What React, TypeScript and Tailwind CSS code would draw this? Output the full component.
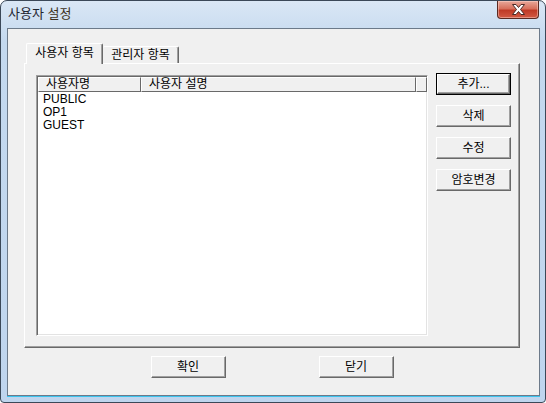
import React from "react";

const FONT = { fontFamily: '"Liberation Sans", "Noto Sans CJK KR", sans-serif' };

const users = ["PUBLIC", "OP1", "GUEST"];

function PushButton({ label, isDefault = false }: { label: string; isDefault?: boolean }) {
  const face = (
    <div className="flex h-full w-full items-center justify-center border border-t-white border-l-white border-r-[#696969] border-b-[#696969] bg-[#f0f0f0] text-[12px] leading-none text-black shadow-[inset_-1px_-1px_0_#a0a0a0]">
      {label}
    </div>
  );
  if (isDefault) {
    return <div className="h-[22px] w-[75px] border border-black">{face}</div>;
  }
  return <div className="h-[22px] w-[75px]">{face}</div>;
}

function CloseButton() {
  return (
    <div className="flex h-[18px] w-[42px] items-center justify-center rounded-b-[4px] border border-t-0 border-[#5a2a22] bg-[linear-gradient(#e8a89a_0%,#d7705c_45%,#bf3a26_55%,#d25a44_100%)] shadow-[inset_0_0_0_1px_rgba(255,220,210,0.45)]">
      <svg width="15" height="11" viewBox="0 0 15 11">
        <path
          d="M1.5 0.5 H5 L7.5 3.5 L10 0.5 H13.5 L9.5 5.5 L13.5 10.5 H10 L7.5 7.5 L5 10.5 H1.5 L5.5 5.5 Z"
          fill="#ffffff"
          stroke="#4a2a26"
          strokeWidth="1"
          strokeLinejoin="round"
        />
      </svg>
    </div>
  );
}

export default function App() {
  return (
    <div
      className="flex h-[403px] w-[546px] flex-col overflow-hidden rounded-t-[7px] rounded-b-[4px] border border-[#3b4858] bg-[linear-gradient(#dae7f5,#c4d9ef_40px,#bfd5ee)]"
      style={FONT}
    >
      {/* title bar */}
      <div className="flex h-[27px] items-start justify-between pl-[7px] pr-[6px]">
        <span className="pt-[5px] text-[13px] leading-[16px] text-[#1f2530]">
          사용자 <span className="text-[#3d3020]">설정</span>
        </span>
        <CloseButton />
      </div>

      {/* client area */}
      <div className="ml-[6px] mr-[5px] mb-[6px] flex flex-1 flex-col border border-[#6c7a8a] bg-[#f0f0f0] pl-[16px] pr-[19px] pt-[14px] shadow-[0_1px_0_#3cc4ee]">
        {/* tabs */}
        <div className="flex h-[20px] items-end pl-[2px]">
          <div className="relative z-10 -mb-[1px] flex h-[21px] w-[77px] items-start justify-center rounded-t-[2px] border-t border-l border-r border-t-white border-l-white border-r-[#696969] bg-[#f0f0f0] pt-[2px] text-[12px] leading-[14px] text-black shadow-[inset_-1px_0_0_#a0a0a0]">
            사용자 항목
          </div>
          <div className="flex h-[17px] w-[76px] items-start justify-center rounded-t-[2px] border-t border-r border-t-white border-r-[#696969] bg-[#f0f0f0] pt-[1px] text-[12px] leading-[14px] text-black shadow-[inset_-1px_0_0_#a0a0a0]">
            관리자 항목
          </div>
        </div>

        {/* tab panel */}
        <div className="flex h-[285px] border border-t-white border-l-white border-r-[#696969] border-b-[#696969] pl-[11px] pt-[11px] shadow-[inset_-1px_-1px_0_#a0a0a0]">
          {/* list view */}
          <div className="flex h-[261px] w-[392px] flex-col border border-t-[#a0a0a0] border-l-[#a0a0a0] border-r-white border-b-white bg-white shadow-[inset_1px_1px_0_#696969,inset_-1px_-1px_0_#e3e3e3]">
            <div className="ml-[1px] mt-[1px] flex h-[15px] text-[12px] leading-[13px] text-black">
              <div className="w-[103px] border border-t-white border-l-white border-r-[#696969] border-b-[#696969] bg-[#f0f0f0] pl-[7px]">
                사용자명
              </div>
              <div className="w-[275px] border border-t-white border-l-white border-r-[#696969] border-b-[#696969] bg-[#f0f0f0] pl-[7px]">
                사용자 설명
              </div>
              <div className="flex-1 border border-t-white border-l-white border-r-[#696969] border-b-[#696969] bg-[#f0f0f0]" />
            </div>
            <div className="pl-[6px] pt-[1px] text-[12px] leading-[13px] text-black">
              {users.map((u) => (
                <div key={u}>{u}</div>
              ))}
            </div>
          </div>

          {/* side buttons */}
          <div className="ml-[8px] flex flex-col gap-[10px]">
            <div className="-mt-[2px]">
              <PushButton label="추가..." isDefault />
            </div>
            <PushButton label="삭제" />
            <PushButton label="수정" />
            <PushButton label="암호변경" />
          </div>
        </div>

        {/* bottom buttons */}
        <div className="flex justify-center gap-[93px] pt-[8px]">
          <PushButton label="확인" />
          <PushButton label="닫기" />
        </div>
      </div>
    </div>
  );
}
